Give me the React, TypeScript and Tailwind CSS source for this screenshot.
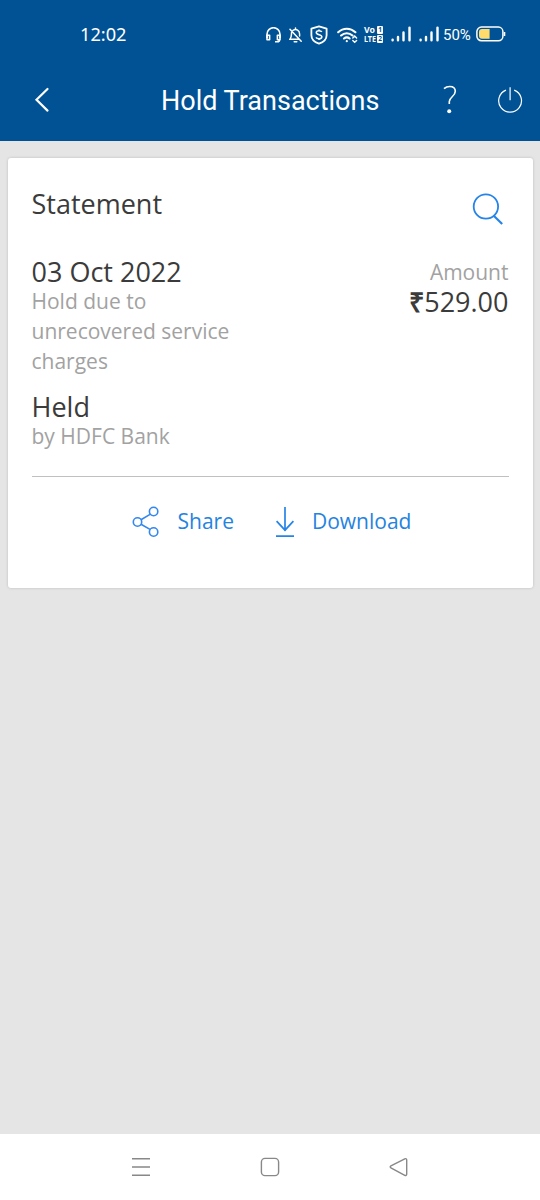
import React from "react";

function Signal() {
  return (
    <svg width="20" height="18" viewBox="0 0 20 18" stroke="#fff" strokeWidth="2.4" strokeLinecap="round">
      <path d="M1.6 14.6v.6M7 12v3.2M12.5 7.4v7.8M18.5 2.6v12.6" />
    </svg>
  );
}

function StatusBar() {
  return (
    <div className="flex h-[68px] items-center pl-20 text-white font-['Noto_Sans','Open_Sans',sans-serif]">
      <span className="w-[186px] text-[18.2px] leading-6">12:02</span>
      <svg className="mr-[8px] mt-px" width="15" height="16" viewBox="0 0 15 16" fill="none" stroke="#fff" strokeWidth="1.6" strokeLinejoin="round">
        <path d="M1 11V7.2a6.5 6.5 0 0 1 13 0V11" />
        <path d="M1 8.2h2.6v4.6H1zM11.4 8.2H14v4.6h-2.6zM13.6 12.8c0 1.2-.8 2-2.2 2H9" />
      </svg>
      <svg className="mr-2 mt-px" width="13" height="16" viewBox="0 0 13 16" fill="none" stroke="#fff" strokeWidth="1.5" strokeLinecap="round">
        <path d="M6.5 1v1.2M4 3.3c3.4-1.8 6.6.3 6.6 3.8v2M2.6 5.4c-.3 3 .1 4.5-1.6 6.8h9.3M5.2 14.8h2.6M1 2.2l11.2 12" />
      </svg>
      <svg className="mr-[9px] mt-px" width="18" height="20" viewBox="0 0 18 20" fill="none" stroke="#fff" strokeWidth="1.8" strokeLinejoin="round">
        <path d="M9 1.3 16.6 3.7v6.5c0 4.2-3 6.9-7.6 8.5-4.6-1.6-7.6-4.3-7.6-8.5V3.7z" />
        <path d="M11.8 6.9c-.5-.9-1.5-1.2-2.8-1.2-1.6 0-2.7.6-2.7 1.9 0 2.8 5.5 1.4 5.5 4.2 0 1.3-1.2 2-2.8 2-1.4 0-2.5-.5-3-1.4M9 4.4v1.2M9 13.8V15" strokeWidth="1.6" />
      </svg>
      <svg className="mr-[6px] mt-px" width="21" height="18" viewBox="0 0 21 18" fill="none" stroke="#fff" strokeWidth="2.1" strokeLinecap="round">
        <path d="M1.2 6.2c5-4.7 12.2-4.7 17.2 0M4.1 9.5c3.3-3 8.1-3 11.4 0M7 12.5c1.7-1.4 3.9-1.4 5.6 0" />
        <circle cx="9.8" cy="15.2" r="1.1" fill="#fff" stroke="none" />
        <path d="M15.8 12l1.9-1.9 1.9 1.9M15.8 14.4l1.9 1.9 1.9-1.9" strokeWidth="1.4" />
      </svg>
      <div className="mr-2 flex h-[18px] w-[19px] justify-between">
        <svg className="overflow-visible" width="12" height="18" viewBox="0 0 12 18" fill="#fff">
          <text x="0" y="8" fontSize="8" fontWeight="700" textLength="11" lengthAdjust="spacingAndGlyphs">Vo</text>
          <text x="0" y="17" fontSize="8" fontWeight="700" textLength="12" lengthAdjust="spacingAndGlyphs">LTE</text>
        </svg>
        <div className="flex flex-col gap-px pt-px text-center text-[6.5px] leading-[8px] font-bold text-[#005294]">
          <span className="h-[8px] w-[6px] rounded-[1px] bg-white">1</span>
          <span className="h-[8px] w-[6px] rounded-[1px] bg-white">2</span>
        </div>
      </div>
      <Signal />
      <div className="w-2" />
      <Signal />
      <span className="ml-[4px] mt-px w-[33px] text-[15px] leading-5 font-normal font-[Roboto,sans-serif]">50%</span>
      <svg width="30" height="16" viewBox="0 0 30 16" fill="none">
        <rect x=".9" y="1.1" width="26" height="13.6" rx="4.5" stroke="#fff" strokeWidth="1.5" />
        <path d="M6 3h7.6v9.8H6a3 3 0 0 1-3-3V6a3 3 0 0 1 3-3z" fill="#ffdc6c" />
        <path d="M28.5 6v4" stroke="#fff" strokeWidth="1.6" />
      </svg>
    </div>
  );
}

function Header() {
  return (
    <header className="h-[141px] bg-[#005294]">
      <StatusBar />
      <div className="flex h-16 items-center pl-[34px] text-white">
        <svg width="16" height="26" viewBox="0 0 16 26" fill="none" stroke="#fff" strokeWidth="2.2" strokeLinecap="round">
          <path d="M13.5 2 2.5 12.8l11 10.8" />
        </svg>
        <h1 className="ml-[111px] mt-[2px] w-[282px] text-[27px] leading-9 font-normal whitespace-nowrap font-[Roboto,sans-serif]">
          Hold Transactions
        </h1>
        <svg width="14" height="30" viewBox="0 0 14 30" fill="none" stroke="#fff" strokeWidth="1.6">
          <path d="M1 3.7C3 1.9 4.7 1.5 6.7 1.5c3.3 0 5.6 1.9 5.6 4.8 0 5.2-6 5.6-6 10.3v2.4" />
          <circle cx="6.2" cy="26.2" r="2" fill="#fff" stroke="none" />
        </svg>
        <svg className="ml-[40px]" width="26" height="28" viewBox="0 0 26 28" fill="none" stroke="#fff" strokeWidth="1.2">
          <path d="M9 4.1a11.4 11.4 0 1 0 8.2 0M13.1 1.2v13" />
        </svg>
      </div>
    </header>
  );
}

function StatementCard() {
  return (
    <section className="ml-[7.5px] mt-[17px] h-[430px] w-[525px] rounded-[3px] bg-white px-6 pt-7 shadow-[0_0_3px_rgba(0,0,0,0.18)]">
      <div className="flex h-[70px] justify-between">
        <h2 className="text-[27px] leading-9 font-normal">Statement</h2>
        <svg className="mt-[7px] mr-[5px]" width="32" height="32" viewBox="0 0 32 32" fill="none" stroke="#2684e8" strokeWidth="1.8">
          <circle cx="13.9" cy="13.5" r="12.2" />
          <path d="m22 23 8.2 8" strokeWidth="2.2" />
        </svg>
      </div>
      <div className="flex h-[133px] justify-between">
        <div className="w-[240px]">
          <div className="pt-[2px] text-[27px] leading-[28px]">03 Oct 2022</div>
          <p className="text-[21px] leading-[30px] text-[#a2a2a2]">
            Hold due to
            <br />
            unrecovered service
            <br />
            charges
          </p>
        </div>
        <div className="pt-[3px] text-right">
          <div className="text-[21px] leading-[26px] text-[#a2a2a2]">Amount</div>
          <div className="text-[27px] leading-[34px]">
            <span className="font-semibold">₹</span>529.00
          </div>
        </div>
      </div>
      <div className="h-[88px] border-b border-[#c0c0c0]">
        <div className="text-[27px] leading-9">Held</div>
        <div className="text-[21px] leading-[23px] text-[#a2a2a2]">by HDFC Bank</div>
      </div>
      <div className="flex h-[90px] items-center pl-[100px] text-[21px] text-[#2583e0]">
        <button className="flex items-center gap-[18px]">
          <svg width="28" height="32" viewBox="0 0 28 32" fill="none" stroke="#3487ee" strokeWidth="1.6">
            <circle cx="5.5" cy="16" r="4.2" />
            <circle cx="21.6" cy="5.5" r="4.2" />
            <circle cx="21.6" cy="26" r="4.2" />
            <path d="m9 13.8 9-5.4M9 18.2l9 5.2" />
          </svg>
          <span>Share</span>
        </button>
        <button className="ml-[41px] flex items-center gap-[17px]">
          <svg width="20" height="32" viewBox="0 0 20 32" fill="none" stroke="#2684e8" strokeWidth="1.7">
            <path d="M10 1v24M1.6 15.2 10 24.2l8.4-9M1 30.2h18" />
          </svg>
          <span>Download</span>
        </button>
      </div>
    </section>
  );
}

function NavigationBar() {
  return (
    <nav className="mt-auto flex h-[66px] items-center justify-between bg-white pr-[131px] pl-[131px]">
      <svg width="20" height="20" viewBox="0 0 20 20" stroke="#888" strokeWidth="1.6">
        <path d="M1 1.7h18M1 10h18M1 18.3h18" />
      </svg>
      <svg width="20" height="20" viewBox="0 0 20 20" fill="none" stroke="#888" strokeWidth="1.4">
        <rect x="1.4" y="1.4" width="17.2" height="17.2" rx="3.6" />
      </svg>
      <svg width="20" height="20" viewBox="0 0 20 20" fill="none" stroke="#888" strokeWidth="1.4" strokeLinejoin="round">
        <path d="M1.9 8.8 15.8 1.8c1-.5 1.9 0 1.9 1.1v14.4c0 1.1-.9 1.5-1.9 1L1.9 10.8c-.9-.5-.9-1.5 0-2z" />
      </svg>
    </nav>
  );
}

export default function App() {
  return (
    <main className="flex h-[1200px] w-[540px] flex-col overflow-hidden bg-[#e5e5e5] text-[#3b3b3b] font-['Open_Sans',sans-serif]">
      <Header />
      <StatementCard />
      <NavigationBar />
    </main>
  );
}
